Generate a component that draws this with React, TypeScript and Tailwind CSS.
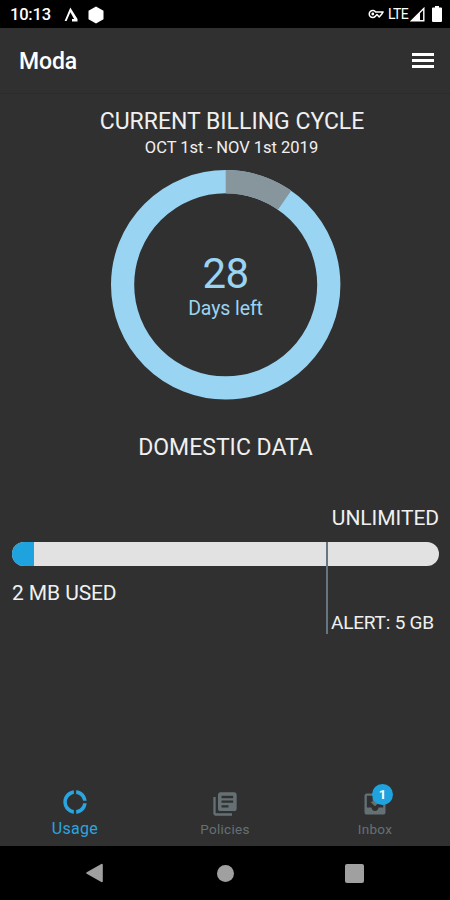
import { MdDonutLarge, MdLibraryBooks, MdMoveToInbox } from "react-icons/md";

const CYCLE_DAYS = 31;
const DAYS_LEFT = 28;

function StatusBar() {
  return (
    <div className="flex h-7 items-center justify-between bg-black pl-2.5 pr-2 text-white">
      <div className="flex items-center">
        <span className="w-[41px] whitespace-nowrap pt-[2px] text-[16.5px] font-medium leading-[26px] tracking-[-0.2px]">
          10:13
        </span>
        <svg className="ml-[13px] mt-[2px] h-4 w-[14px]" viewBox="0 0 14 16">
          <path d="M6.3 0.5 13.5 12v2.5H8l0-2.4h2.1L6.4 5.2 2.6 14H0.6z" fill="currentColor" />
        </svg>
        <svg className="ml-[10px] mt-px h-[18px] w-4" viewBox="0 0 16 18">
          <path d="M8 0.5 15.5 4.7v8.6L8 17.5 0.5 13.3V4.7z" fill="currentColor" />
        </svg>
      </div>
      <div className="flex items-center">
        <svg className="h-[10px] w-4" viewBox="0 0 16 10">
          <path
            d="M7.6 3A3.5 3.5 0 1 0 7.6 7L9 5.6l2.2 2.3 2.2-2.3L15 3z"
            fill="none"
            stroke="currentColor"
            strokeWidth="1.5"
            strokeLinejoin="round"
          />
          <circle cx="4.8" cy="5" r="1.4" fill="currentColor" />
        </svg>
        <span className="ml-1 w-5 whitespace-nowrap pt-px text-[14px] leading-[27px] tracking-[-0.6px]">LTE</span>
        <svg className="ml-[2px] mt-px h-[15px] w-[15px]" viewBox="0 0 15 15">
          <path d="M13.8 1.5v12.3H1.5z" fill="none" stroke="currentColor" strokeWidth="1.4" />
          <path d="M10 5.5V14H1.5z" fill="currentColor" />
        </svg>
        <svg className="ml-[7px] h-4 w-[10px]" viewBox="0 0 10 16">
          <path d="M3 0h4v1.5h2q1 0 1 1V15q0 1-1 1H1q-1 0-1-1V2.500q0-1 1-1h2z" fill="currentColor" />
        </svg>
      </div>
    </div>
  );
}

function Header() {
  return (
    <header className="flex h-[66px] items-center justify-between border-b border-[#2b2b2b] pl-[19px] pr-4">
      <h1 className="pt-[2px] text-[23px] font-medium leading-none tracking-[-0.1px] text-white">Moda</h1>
      <div className="flex w-[22px] flex-col gap-[3px]">
        <span className="h-[3px] bg-white" />
        <span className="h-[3px] bg-white" />
        <span className="h-[3px] bg-white" />
      </div>
    </header>
  );
}

function CycleRing() {
  const radius = 103.1;
  const length = 2 * Math.PI * radius;
  const elapsed = (length * (CYCLE_DAYS - DAYS_LEFT)) / CYCLE_DAYS;

  return (
    <div className="relative mx-auto mt-[11px] h-[230px] w-[230px]">
      <svg className="h-full w-full overflow-visible" viewBox="0 0 230 230">
        <circle cx="115.7" cy="114.8" r={radius} fill="none" stroke="#9ad4f3" strokeWidth="23.2" />
        <circle
          cx="115.7"
          cy="114.8"
          r={radius}
          fill="none"
          stroke="#87959d"
          strokeWidth="23.4"
          strokeDasharray={`${elapsed} ${length}`}
          transform="rotate(-90 115.7 114.8)"
        />
      </svg>
      <div className="absolute inset-0 flex flex-col items-center pl-px pt-[82px] text-[#9ad4f3]">
        <span className="text-[42px] leading-[44px] tracking-[-0.5px]">{DAYS_LEFT}</span>
        <span className="pt-px text-[19.5px] leading-6 tracking-[-0.1px]">Days left</span>
      </div>
    </div>
  );
}

function DataUsage() {
  return (
    <section className="mt-[33px] pl-3 pr-[11px] text-[#f0f0f0]">
      <h2 className="text-center text-[23px] leading-[30px]">DOMESTIC DATA</h2>
      <p className="mt-[43px] text-right text-[21px] leading-6 tracking-[-0.05px]">UNLIMITED</p>
      <div className="relative mt-3">
        <div className="h-6 overflow-hidden rounded-full bg-[#e2e2e2]">
          <div className="h-full w-[22px] bg-[#1fa3df]" />
        </div>
        {/* Alert threshold */}
        <div className="absolute left-[314px] top-0 h-[92px] w-[2px] bg-[#66757f]" />
      </div>
      <p className="mt-[15px] text-[21px] leading-6 tracking-[-0.1px]">2 MB USED</p>
      <p className="mt-[6px] pr-[5px] text-right text-[19px] leading-6 tracking-[-0.2px]">ALERT: 5 GB</p>
    </section>
  );
}

function TabBar() {
  return (
    <nav className="mt-auto grid h-[62px] grid-cols-3 text-[#657075]">
      <div className="flex flex-col items-center pt-1 text-[#2aa5e0]">
        <MdDonutLarge className="h-7 w-7" />
        <span className="mt-[3px] text-[16px] leading-5 tracking-[0.3px]">Usage</span>
      </div>
      <div className="flex flex-col items-center pt-[6px]">
        <MdLibraryBooks className="h-7 w-7" />
        <span className="mt-px text-[13.5px] leading-5 tracking-[0.3px]">Policies</span>
      </div>
      <div className="flex flex-col items-center pt-[6px]">
        <div className="relative">
          <MdMoveToInbox className="h-7 w-7" />
          <span className="absolute -top-[6px] left-[11px] flex h-[21px] w-[21px] items-center justify-center rounded-full bg-[#1fa3df] text-[13px] font-bold text-white">
            1
          </span>
        </div>
        <span className="mt-px text-[13.5px] leading-5 tracking-[0.3px]">Inbox</span>
      </div>
    </nav>
  );
}

function SystemNav() {
  return (
    <div className="flex h-[54px] items-center justify-between bg-black pl-[85px] pr-[86px] text-[#a0a0a0]">
      <svg className="h-5 w-[19px]" viewBox="0 0 19 20">
        <path
          d="M2.2 10 16.8 1.8v16.4z"
          fill="currentColor"
          stroke="currentColor"
          strokeWidth="2"
          strokeLinejoin="round"
        />
      </svg>
      <span className="ml-px h-[17px] w-[17px] rounded-full bg-current" />
      <span className="h-[19px] w-[19px] rounded-[2px] bg-current" />
    </div>
  );
}

export default function App() {
  return (
    <div className="flex h-[900px] w-[450px] flex-col overflow-hidden bg-[#303030] font-[Roboto,sans-serif]">
      <StatusBar />
      <Header />
      <div className="pt-[13px] text-center text-[#f0f0f0]">
        <h2 className="pl-[14px] text-[23px] leading-[30px]">CURRENT BILLING CYCLE</h2>
        <p className="pl-[13px] text-[16.5px] leading-[22px]">OCT 1st - NOV 1st 2019</p>
      </div>
      <CycleRing />
      <DataUsage />
      <TabBar />
      <SystemNav />
    </div>
  );
}
